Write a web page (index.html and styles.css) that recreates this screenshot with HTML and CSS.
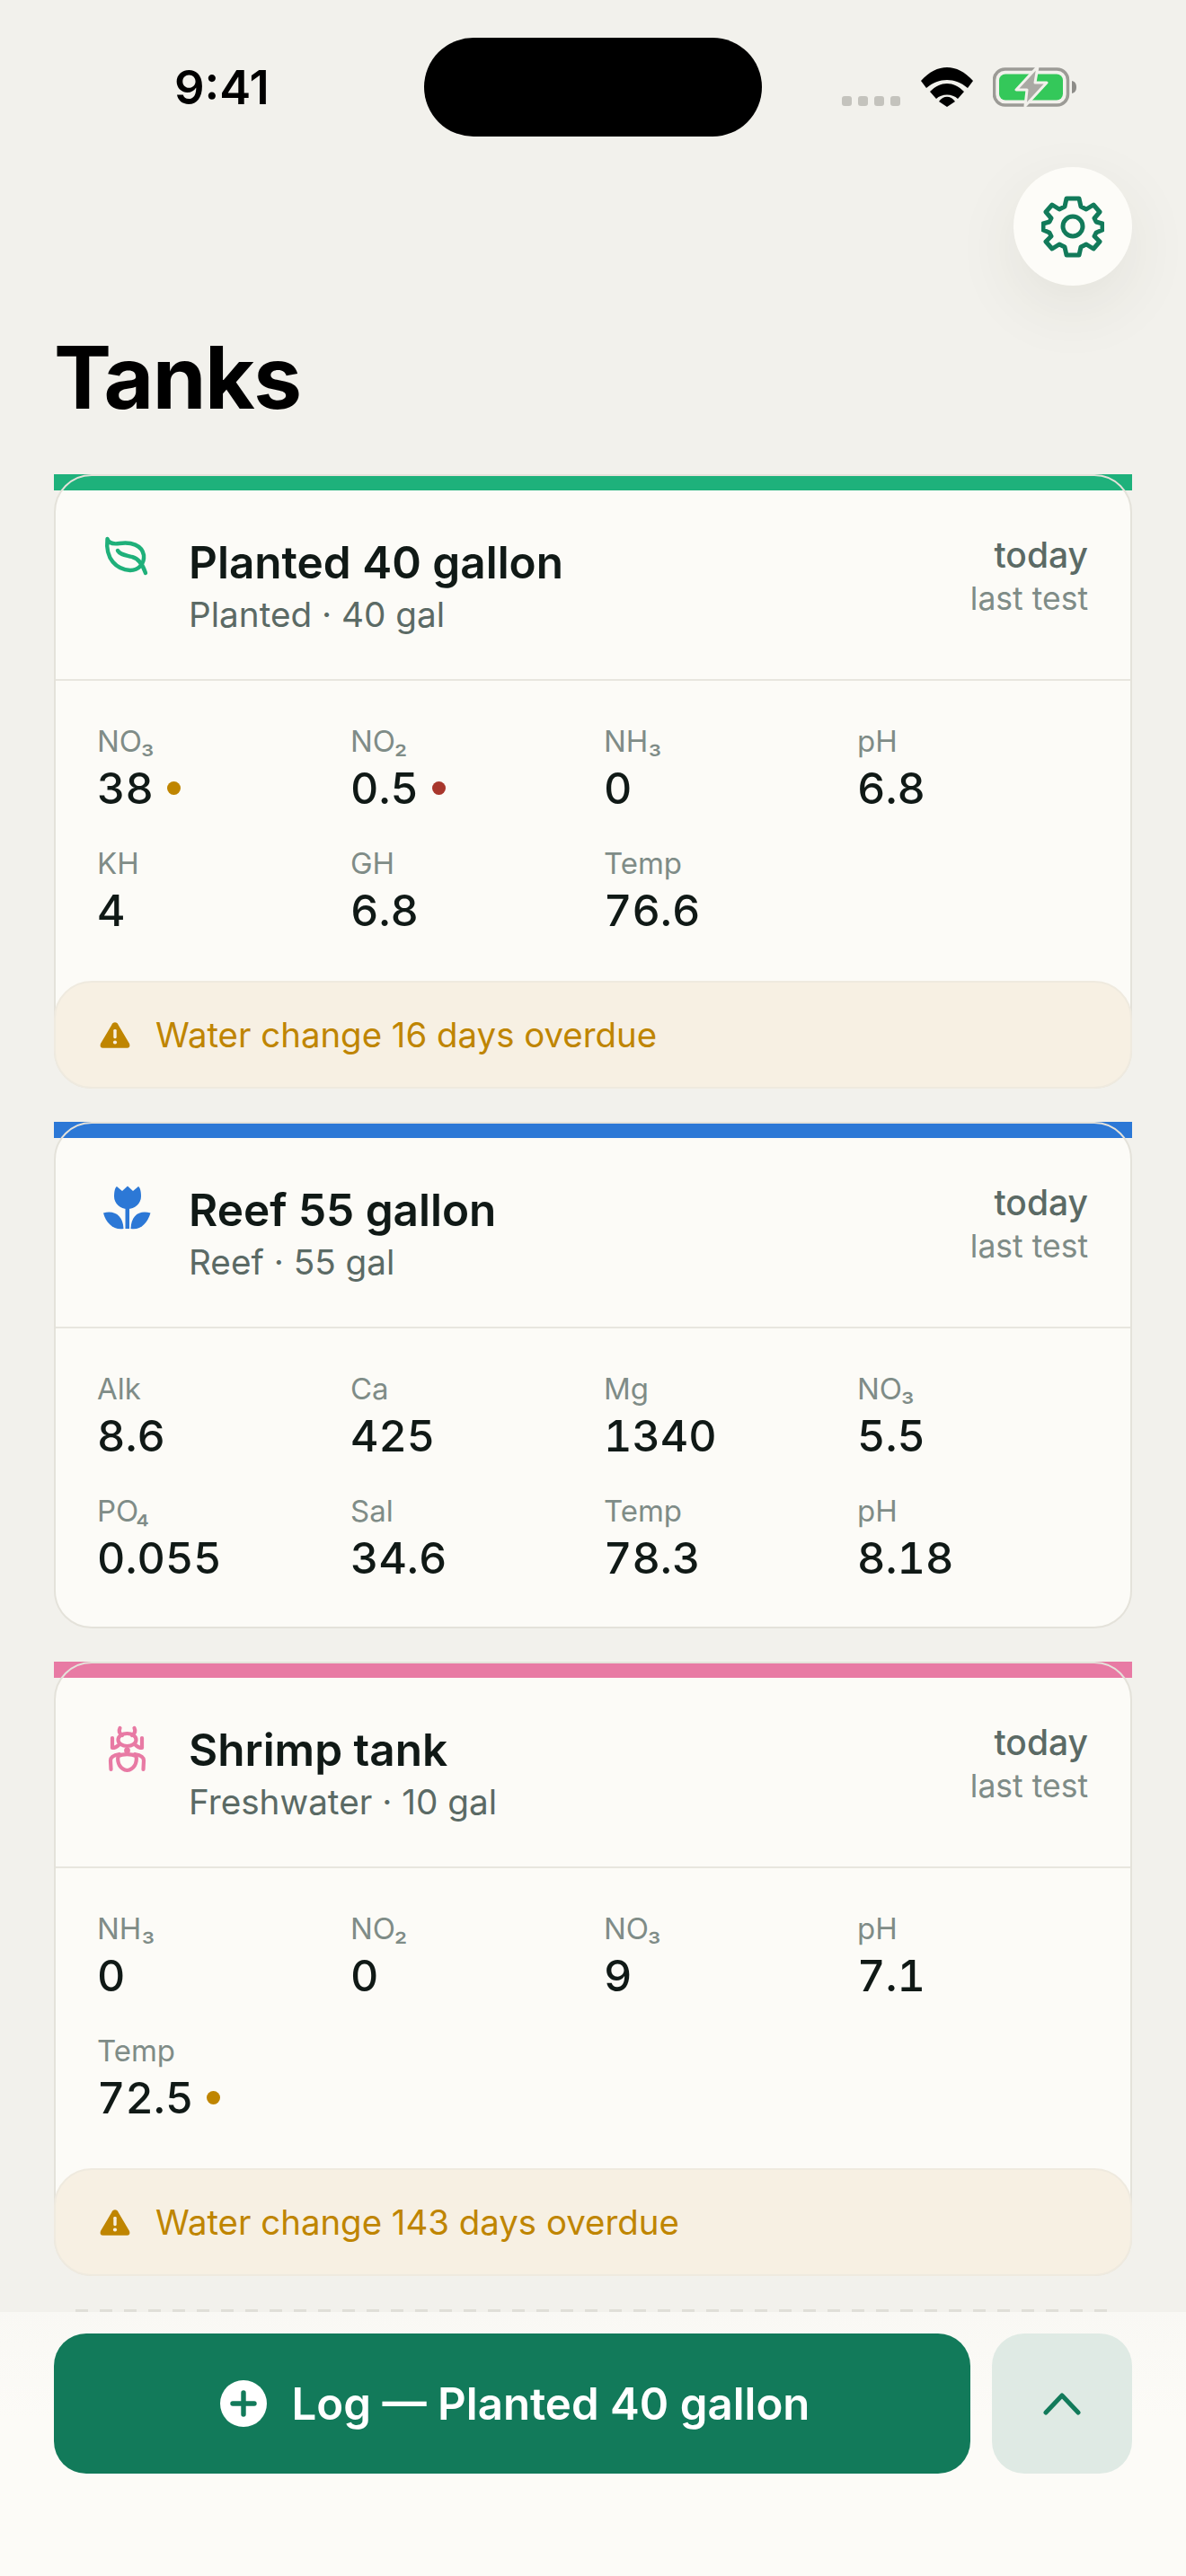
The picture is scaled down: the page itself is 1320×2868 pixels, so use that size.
FILE: index.html
```html
<!DOCTYPE html>
<html lang="en">
  <head>
    <meta charset="UTF-8" />
    <meta name="viewport" content="width=device-width, initial-scale=1.0" />
    <title>Tanks</title>
    <link rel="stylesheet" href="styles.css">
  </head>
  <body>
    <div class="screen">
      <div class="statusBar">
        <div class="clock">9:41</div>
        <div class="island"></div>
        <div class="statusIcons">
          <div class="signal"><span></span><span></span><span></span><span></span></div>
          <svg class="wifi" viewBox="0 0 58 44">
            <path d="M0 15 L6 23 C20 11 38 11 52 23 L58 15 C40 -5 18 -5 0 15Z" />
            <path d="M10 27 L17 35 C23 29 35 29 41 35 L48 27 C36 15 22 15 10 27Z" />
            <path d="M20 38 L29 44 L38 38 C33 31 25 31 20 38Z" />
          </svg>
          <svg class="battery" viewBox="0 0 94 46">
            <rect x="1.5" y="4" width="82" height="40" rx="12" fill="none" stroke="#9c9b96" stroke-width="3.5" />
            <rect x="7" y="9.5" width="71" height="29" rx="7" fill="#34c85a" />
            <path d="M88 17 C92 18 93 21 93 24 C93 27 92 30 88 31Z" fill="#8d8c88" />
            <path d="M50 1 L26 27 L38 27 L36 45 L60 19 L47 19Z" fill="#aaa9a4" stroke="#f2f1ec" stroke-width="3" stroke-linejoin="round" />
          </svg>
        </div>
      </div>

      <div class="topActions">
        <button class="gearButton">
          <svg viewBox="0 0 70 70" fill="none" stroke="#127a5a" stroke-width="5" stroke-linejoin="round">
            <circle cx="35" cy="35" r="11" />
            <path d="M28 4 H42 L44 13 L50 16 L58 11 L65 19 L59 26 L61 30 L68 32 V39 L61 42 L59 46 L65 52 L58 60 L50 55 L44 58 L42 67 H28 L26 58 L20 55 L12 60 L5 52 L11 46 L9 42 L2 39 V32 L9 30 L11 26 L5 19 L12 11 L20 16 L26 13Z" />
          </svg>
        </button>
      </div>

      <h1 class="pageTitle">Tanks</h1>

      <div class="tankList">
        <div class="tankCard">
          <div class="accent accentGreen"></div>
          <div class="cardBody">
            <div class="cardHeader">
              <svg class="tankIcon" viewBox="0 0 70 70" fill="none" stroke="#1fb07a" stroke-width="4.4" stroke-linecap="round" stroke-linejoin="round">
                <path d="M14.5 15 C16 20 21 21 28 20 C41 18 53 22 55 33 C56 43 49 50 40 50 C25 49 12 38 14.5 15Z" />
                <path d="M26 28 C29 33 35 33 42 35 C50 37 54 44 57 53" />
              </svg>
              <div class="tankTitle">
                <div class="tankName">Planted 40 gallon</div>
                <div class="tankMeta">Planted · 40 gal</div>
              </div>
              <div class="lastTest">
                <div class="lastDay">today</div>
                <div class="lastLabel">last test</div>
              </div>
            </div>
            <div class="metrics">
              <div class="metric"><div class="metricLabel">NO₃</div><div class="metricValue">38<span class="dot dotAmber"></span></div></div>
              <div class="metric"><div class="metricLabel">NO₂</div><div class="metricValue">0.5<span class="dot dotRed"></span></div></div>
              <div class="metric"><div class="metricLabel">NH₃</div><div class="metricValue">0</div></div>
              <div class="metric"><div class="metricLabel">pH</div><div class="metricValue">6.8</div></div>
              <div class="metric"><div class="metricLabel">KH</div><div class="metricValue">4</div></div>
              <div class="metric"><div class="metricLabel">GH</div><div class="metricValue">6.8</div></div>
              <div class="metric"><div class="metricLabel">Temp</div><div class="metricValue">76.6</div></div>
            </div>
            <div class="alertRow">
              <svg class="alertIcon" viewBox="0 0 36 32"><path d="M18 1 C20 1 21 2 22 4 L35 26 C36 29 35 31 32 31 H4 C1 31 0 29 1 26 L14 4 C15 2 16 1 18 1Z" fill="#bf8500" /><rect x="16.2" y="9" width="3.6" height="11" rx="1.5" fill="#f7f0e3" /><circle cx="18" cy="24.5" r="2.2" fill="#f7f0e3" /></svg>
              <span>Water change 16 days overdue</span>
            </div>
          </div>
        </div>

        <div class="tankCard">
          <div class="accent accentBlue"></div>
          <div class="cardBody">
            <div class="cardHeader">
              <svg class="tankIcon" viewBox="0 0 70 70" fill="#2c78d6">
                <path d="M25 15 L31 20 L37 14.5 L43 20 L49 15 C51 16 52 21 52 26 C52 34 45 40 37 40 C29 40 22 34 22 26 C22 21 23 16 25 15Z" />
                <path d="M34.5 38 H39 V62 H34.5Z" />
                <path d="M10 44.5 C22 41 32 47 32.5 62 C22 64 13 56 10 44.5Z" />
                <path d="M62.5 44.5 C50 41 41 47 40.5 62 C51 64 59 56 62.5 44.5Z" />
              </svg>
              <div class="tankTitle">
                <div class="tankName">Reef 55 gallon</div>
                <div class="tankMeta">Reef · 55 gal</div>
              </div>
              <div class="lastTest">
                <div class="lastDay">today</div>
                <div class="lastLabel">last test</div>
              </div>
            </div>
            <div class="metrics">
              <div class="metric"><div class="metricLabel">Alk</div><div class="metricValue">8.6</div></div>
              <div class="metric"><div class="metricLabel">Ca</div><div class="metricValue">425</div></div>
              <div class="metric"><div class="metricLabel">Mg</div><div class="metricValue">1340</div></div>
              <div class="metric"><div class="metricLabel">NO₃</div><div class="metricValue">5.5</div></div>
              <div class="metric"><div class="metricLabel">PO₄</div><div class="metricValue">0.055</div></div>
              <div class="metric"><div class="metricLabel">Sal</div><div class="metricValue">34.6</div></div>
              <div class="metric"><div class="metricLabel">Temp</div><div class="metricValue">78.3</div></div>
              <div class="metric"><div class="metricLabel">pH</div><div class="metricValue">8.18</div></div>
            </div>
          </div>
        </div>

        <div class="tankCard">
          <div class="accent accentPink"></div>
          <div class="cardBody">
            <div class="cardHeader">
              <svg class="tankIcon" viewBox="0 0 70 70" fill="none" stroke="#e87aa4" stroke-width="4.2" stroke-linecap="round" stroke-linejoin="round">
                <path d="M28.5 17 C27 20 28 23 31 25 M44.5 17 C46 20 45 23 42 25" />
                <ellipse cx="36.5" cy="30" rx="10" ry="7" />
                <circle cx="36.5" cy="42" r="3.4" fill="#e87aa4" stroke="none" />
                <path d="M26.5 48 C25 56 29 63 36.5 64 C44 63 48 56 46.5 48 C41 45.5 32 45.5 26.5 48Z" />
                <path d="M20 28 V39 C22 39 25 38 27 36 M53 28 V39 C51 39 48 38 46 36" />
                <path d="M18.5 63 L18 53 C18 49 22 47 28 46 M54.5 63 L55 53 C55 49 51 47 45 46" />
              </svg>
              <div class="tankTitle">
                <div class="tankName">Shrimp tank</div>
                <div class="tankMeta">Freshwater · 10 gal</div>
              </div>
              <div class="lastTest">
                <div class="lastDay">today</div>
                <div class="lastLabel">last test</div>
              </div>
            </div>
            <div class="metrics">
              <div class="metric"><div class="metricLabel">NH₃</div><div class="metricValue">0</div></div>
              <div class="metric"><div class="metricLabel">NO₂</div><div class="metricValue">0</div></div>
              <div class="metric"><div class="metricLabel">NO₃</div><div class="metricValue">9</div></div>
              <div class="metric"><div class="metricLabel">pH</div><div class="metricValue">7.1</div></div>
              <div class="metric"><div class="metricLabel">Temp</div><div class="metricValue">72.5<span class="dot dotAmber"></span></div></div>
            </div>
            <div class="alertRow">
              <svg class="alertIcon" viewBox="0 0 36 32"><path d="M18 1 C20 1 21 2 22 4 L35 26 C36 29 35 31 32 31 H4 C1 31 0 29 1 26 L14 4 C15 2 16 1 18 1Z" fill="#bf8500" /><rect x="16.2" y="9" width="3.6" height="11" rx="1.5" fill="#f7f0e3" /><circle cx="18" cy="24.5" r="2.2" fill="#f7f0e3" /></svg>
              <span>Water change 143 days overdue</span>
            </div>
          </div>
        </div>

        <div class="addCard"></div>
      </div>

      <div class="bottomBar">
        <button class="logButton">
          <svg viewBox="0 0 52 52"><circle cx="26" cy="26" r="26" fill="#fff" /><path d="M26 14 V38 M14 26 H38" stroke="#127a5a" stroke-width="5.4" stroke-linecap="round" /></svg>
          <span>Log — Planted 40 gallon</span>
        </button>
        <button class="expandButton">
          <svg viewBox="0 0 42 26" fill="none" stroke="#127a5a" stroke-width="5" stroke-linecap="round" stroke-linejoin="round"><path d="M3 23 L21 4 L39 23" /></svg>
        </button>
      </div>
    </div>
  </body>
</html>
```

FILE: styles.css
```css
* {
  box-sizing: border-box;
}
body {
  margin: 0;
  background-color: #f2f1ec;
  font-family: Inter, "Liberation Sans", sans-serif;
}
.screen {
  position: relative;
  height: 2868px;
  overflow: hidden;
  padding: 0 60px;
}
.statusBar {
  display: flex;
  align-items: flex-start;
  height: 186px;
  margin: 0 -60px;
  padding: 42px 0 0 194px;
}
.clock {
  width: 278px;
  margin-top: 30px;
  font-size: 52.5px;
  line-height: 50px;
  font-weight: 600;
  color: #000;
}
.island {
  width: 376px;
  height: 110px;
  border-radius: 55px;
  background-color: #000;
}
.statusIcons {
  display: flex;
  align-items: flex-end;
  margin-left: 89px;
  margin-top: 33px;
  height: 44px;
}
.signal {
  display: flex;
  gap: 7px;
  margin-bottom: 1px;
}
.signal span {
  width: 11px;
  height: 11px;
  border-radius: 3px;
  background-color: #c4c3bd;
}
.wifi {
  width: 58px;
  height: 44px;
  margin-left: 23px;
}
.battery {
  width: 94px;
  height: 46px;
  margin-left: 22px;
}
.topActions {
  display: flex;
  justify-content: flex-end;
}
.gearButton {
  display: flex;
  align-items: center;
  justify-content: center;
  width: 132px;
  height: 132px;
  padding: 0;
  border: none;
  border-radius: 50%;
  background-color: #fdfcf8;
  box-shadow: 0 24px 72px rgba(60, 60, 40, 0.08);
}
.gearButton svg {
  width: 70px;
  height: 70px;
}
.pageTitle {
  margin: 42px 0 0;
  font-size: 96px;
  line-height: 120px;
  font-weight: 700;
  letter-spacing: -1.5px;
  color: #000;
}
.tankList {
  display: flex;
  flex-direction: column;
  gap: 37px;
  margin-top: 48px;
}
.tankCard {
  position: relative;
}
.accent {
  position: absolute;
  top: 0;
  left: 0;
  right: 0;
  height: 18px;
}
.accentGreen {
  background-color: #1eb17b;
}
.accentBlue {
  background-color: #2c78d6;
}
.accentPink {
  background-color: #e87aa4;
}
.cardBody {
  position: relative;
  border: 2px solid #e4e2da;
  border-radius: 42px;
  background: linear-gradient(#fcfbf7, #fcfbf7) 0 16px / 100% 100% no-repeat;
}
.cardHeader {
  display: flex;
  align-items: flex-start;
  height: 228px;
  padding: 66px 47px 0 43px;
  border-bottom: 2px solid #e8e6df;
}
.tankIcon {
  width: 70px;
  height: 70px;
  margin-top: -11px;
  flex-shrink: 0;
}
.tankTitle {
  flex: 1;
  margin-left: 35px;
}
.tankName {
  font-size: 49.5px;
  line-height: 60px;
  font-weight: 600;
  color: #101916;
}
.tankMeta {
  margin-top: 4px;
  font-size: 38.7px;
  line-height: 48px;
  color: #5b6a65;
}
.lastTest {
  margin-top: -2px;
  text-align: right;
}
.lastDay {
  font-size: 39px;
  line-height: 48px;
  font-weight: 500;
  color: #5b6a65;
}
.lastLabel {
  margin-top: 4px;
  font-size: 35.5px;
  line-height: 42px;
  color: #7f8c87;
}
.metrics {
  display: grid;
  grid-template-columns: repeat(4, 282px);
  row-gap: 32px;
  padding: 46px 46px 48px;
}
.metrics:last-child {
  padding-bottom: 46px;
}
.metricLabel {
  font-size: 33px;
  line-height: 42px;
  color: #7f8c87;
}
.metricValue {
  display: flex;
  align-items: center;
  gap: 15px;
  height: 62px;
  font-size: 48.5px;
  font-weight: 500;
  font-variant-numeric: tabular-nums;
  color: #101916;
}
.dot {
  width: 15px;
  height: 15px;
  border-radius: 50%;
}
.dotAmber {
  background-color: #bf8500;
}
.dotRed {
  background-color: #a8362c;
}
.alertRow {
  display: flex;
  align-items: center;
  gap: 28px;
  height: 120px;
  margin: 0 -2px -2px;
  padding-left: 49px;
  border: 2px solid #efeadf;
  border-radius: 42px;
  background-color: #f7f0e3;
  font-size: 38.4px;
  color: #bf8500;
}
.alertIcon {
  width: 34px;
  height: 31px;
}
.addCard {
  height: 3px;
  margin: 0 24px;
  background: repeating-linear-gradient(90deg, #e0dfd8 0 14px, transparent 14px 27px);
}
.bottomBar {
  position: absolute;
  left: 0;
  right: 0;
  bottom: 0;
  display: flex;
  gap: 24px;
  height: 294px;
  padding: 24px 60px 0;
  background: linear-gradient(#f9f8f4, #fcfbf7 40%);
}
.logButton {
  display: flex;
  align-items: center;
  justify-content: center;
  gap: 28px;
  flex: 1;
  height: 156px;
  padding: 0 0 0 6px;
  border: none;
  border-radius: 36px;
  background-color: #127a5a;
  font-family: inherit;
  font-size: 49.2px;
  font-weight: 600;
  color: #fff;
}
.logButton svg {
  width: 52px;
  height: 52px;
}
.expandButton {
  display: flex;
  align-items: center;
  justify-content: center;
  width: 156px;
  height: 156px;
  border: none;
  border-radius: 36px;
  background-color: #dfeae4;
}
.expandButton svg {
  width: 42px;
  height: 26px;
}
```
